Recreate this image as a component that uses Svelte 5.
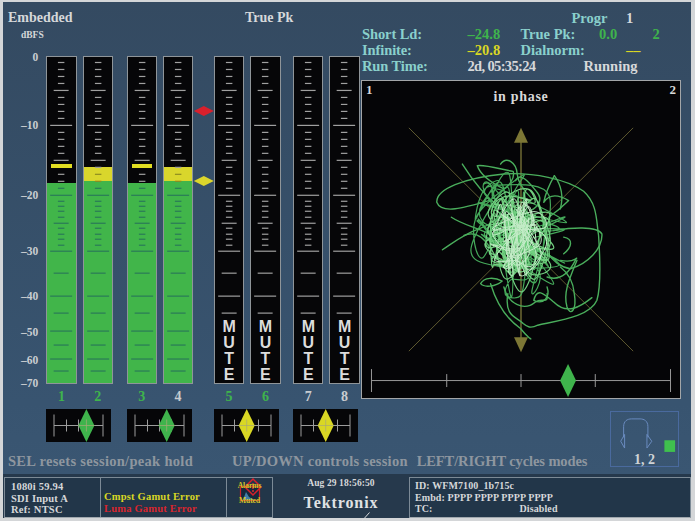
<script lang="ts">
	const top = 56;
	const scale = [
		[0, 58], [-10, 126], [-20, 196], [-30, 252], [-40, 297], [-50, 333], [-60, 361], [-70, 384]
	];
	const small = [62, 69, 76, 83, 97, 104, 111, 118, 132, 139, 146, 153, 167, 174, 181, 188, 201, 206, 211, 217, 228, 234, 239, 245];
	const medium = [90, 160, 223, 273, 313, 345, 371];
	const long = [125, 195, 251, 296, 331, 359];
	const ticks = [
		...small.map((y) => ({ y, w: 6.5 })),
		...medium.map((y) => ({ y, w: 15 })),
		...long.map((y) => ({ y, w: 22 }))
	];

	const groups = [
		[
			{ n: 1, fill: 183, peak: 163.5, numColor: 'green' },
			{ n: 2, fill: 181, hold: 167, numColor: 'green' }
		],
		[
			{ n: 3, fill: 183, peak: 163.5, numColor: 'green' },
			{ n: 4, fill: 181, hold: 167, numColor: 'white' }
		],
		[
			{ n: 5, muted: true, numColor: 'green' },
			{ n: 6, muted: true, numColor: 'green' }
		],
		[
			{ n: 7, muted: true, numColor: 'white' },
			{ n: 8, muted: true, numColor: 'white' }
		]
	];

	const balances = [
		{ pos: 40.4, color: '#3fb44c' },
		{ pos: 39.7, color: '#3fb44c' },
		{ pos: 32.7, color: '#d9d724' },
		{ pos: 32.7, color: '#d9d724' }
	];

	// seeded so the lissajous blob comes out the same on every load
	function rng(seed: number) {
		return () => {
			seed = (seed + 0x6d2b79f5) | 0;
			let t = Math.imul(seed ^ (seed >>> 15), 1 | seed);
			t = (t + Math.imul(t ^ (t >>> 7), 61 | t)) ^ t;
			return ((t ^ (t >>> 14)) >>> 0) / 4294967296;
		};
	}

	function blob(seed: number, count: number, rx: number, ry: number) {
		const r = rng(seed);
		const pts: number[][] = [];
		for (let i = 0; i < count; i++) {
			const a = r() * Math.PI * 2;
			const d = Math.sqrt(r());
			pts.push([520 + Math.cos(a) * d * rx, 236 + Math.sin(a) * d * ry]);
		}
		let d = `M${pts[0][0].toFixed(1)} ${pts[0][1].toFixed(1)}`;
		for (let i = 0; i < pts.length - 1; i++) {
			const p0 = pts[Math.max(i - 1, 0)];
			const p1 = pts[i];
			const p2 = pts[i + 1];
			const p3 = pts[Math.min(i + 2, pts.length - 1)];
			const c1 = [p1[0] + (p2[0] - p0[0]) / 6, p1[1] + (p2[1] - p0[1]) / 6];
			const c2 = [p2[0] - (p3[0] - p1[0]) / 6, p2[1] - (p3[1] - p1[1]) / 6];
			d += `C${c1[0].toFixed(1)} ${c1[1].toFixed(1)} ${c2[0].toFixed(1)} ${c2[1].toFixed(1)} ${p2[0].toFixed(1)} ${p2[1].toFixed(1)}`;
		}
		return d;
	}

	const blobOuter = blob(7, 60, 52, 62);
	const blobMid = blob(21, 90, 38, 50);
	const blobCore = blob(5, 70, 31, 40);

	// outer loops traced by hand, in 3x crop coordinates
	const loops = [
		'M65 388C100 365 130 340 175 325C210 312 225 300 240 280',
		'M92 290C130 315 170 320 215 345C240 360 250 380 262 400',
		'M205 240C130 262 62 282 48 245C46 205 130 172 250 160C335 154 440 175 490 212C532 250 528 300 535 345C540 420 542 500 530 540C510 588 420 600 352 615C330 626 320 620 308 610C290 590 250 590 262 520',
		'M125 130C150 170 190 225 240 262',
		'M170 135C190 130 250 148 278 152C285 175 260 200 250 205C220 190 180 165 170 135Z',
		'M240 130C258 105 288 125 290 160C292 190 320 220 335 235',
		'M400 330C450 322 530 315 545 340C548 385 500 432 450 445C420 440 395 420 385 400',
		'M180 490C190 470 222 470 245 482C225 500 190 502 180 490Z',
		'M402 165C385 195 375 220 370 245C390 215 420 225 445 240C420 265 400 280 385 290',
		'M402 165C420 190 432 220 420 265',
		'M515 532C480 560 440 585 400 545C370 520 350 500 340 540C370 555 390 530 380 500',
		'M470 420C445 480 428 520 440 560C450 590 470 570 462 520C458 480 440 455 420 440',
		'M210 490C225 540 250 590 300 625C320 650 335 660 330 655',
		'M190 190C205 180 220 195 215 225',
		'M430 350C460 355 455 380 430 400',
		'M250 500C262 550 310 575 345 545C365 530 385 555 380 520',
		'M130 345C165 330 190 350 210 385',
		'M420 420C470 430 475 400 465 420C440 470 410 480 380 470',
		'M285 180C300 150 330 190 350 215C370 240 350 260 330 270'
	];

	const phonesPath = 'M623 438V427C623 421 627 419 631 419H640C644 419 648 421 648 427V438';
</script>

<div class="screen">
	<div class="upper">
		<section class="meters">
			<header class="meters-head">
				<div>
					<h1>Embedded</h1>
					<span class="unit">dBFS</span>
				</div>
				<span class="mode">True Pk</span>
			</header>

			<div class="meters-body">
				<div class="scale">
					{#each scale as [value, y]}
						<span style="top: {y - top}px">{value === 0 ? '0' : `–${-value}`}</span>
					{/each}
				</div>

				<div class="bars">
					{#each groups as group}
						<div class="pair">
							{#each group as m}
								<div class="bar-col">
									<div class="bar">
										{#if m.fill}
											<div class="fill" style="top: {m.fill - top - 1}px"></div>
										{/if}
										{#if m.hold}
											<div class="hold" style="top: {m.hold - top - 1}px; height: {m.fill - m.hold}px"></div>
										{/if}
										<svg class="ticks" viewBox="0 0 28.3 326">
											{#each ticks as t}
												{#if !m.muted || t.y < 320}
													<line
														x1={14.15 - t.w / 2}
														x2={14.15 + t.w / 2}
														y1={t.y - top - 0.5}
														y2={t.y - top - 0.5}
														stroke={m.fill && t.y > m.fill ? '#2a7a58' : m.hold && t.y > m.hold ? '#8e8c20' : '#a0a0a0'}
														stroke-width="1.2"
													/>
												{/if}
											{/each}
										</svg>
										{#if m.peak}
											<div class="peak" style="top: {m.peak - top - 1}px"></div>
										{/if}
										{#if m.muted}
											<div class="mute">
												<span>M</span><span>U</span><span>T</span><span>E</span>
											</div>
										{/if}
									</div>
									<span class="num {m.numColor}">{m.n}</span>
								</div>
							{/each}
						</div>
					{/each}
					<span class="marker red"></span>
					<span class="marker yellow"></span>
				</div>
			</div>
		</section>

		<section class="right">
			<div class="readout">
				<span class="cy c-progr">Progr</span>
				<span class="wh c-one">1</span>

				<span class="cy c-a r2">Short Ld:</span>
				<span class="gr c-b r2">–24.8</span>
				<span class="cy c-c r2">True Pk:</span>
				<span class="gr c-d r2">0.0</span>
				<span class="gr c-e r2">2</span>

				<span class="cy c-a r3">Infinite:</span>
				<span class="ye c-b r3">–20.8</span>
				<span class="cy c-c r3">Dialnorm:</span>
				<span class="ye c-dash r3">––</span>

				<span class="cy c-a r4">Run Time:</span>
				<span class="wh c-b r4 tight">2d, 05:35:24</span>
				<span class="wh c-run r4">Running</span>
			</div>

			<div class="scope">
				<div class="scope-head">
					<span>1</span>
					<span class="phase">in phase</span>
					<span>2</span>
				</div>
				<svg class="scope-plot" viewBox="361 80 319 318">
					<g stroke="#5e5930" stroke-width="1" fill="none">
						<line x1="408" y1="127" x2="633" y2="351" />
						<line x1="633" y1="127" x2="408" y2="351" />
						<line x1="520.5" y1="135" x2="520.5" y2="345" stroke-width="1.5" stroke="#6f6a34" />
					</g>
					<polygon points="520.5,127 513.5,142 527.5,142" fill="#7d7735" />
					<polygon points="520.5,352 513.5,337 527.5,337" fill="#7d7735" />

					<g fill="none" stroke-linecap="round" stroke-linejoin="round">
						<g transform="translate(420 120) scale(.3333)" stroke="#4aae5c" stroke-width="4.2">
							{#each loops as d}
								<path {d} />
							{/each}
						</g>
						<path d={blobOuter} stroke="#45a95a" stroke-width="1.2" />
						<path d={blobMid} stroke="#72cf80" stroke-width="1.2" />
						<path d={blobCore} stroke="#c4ecc8" stroke-width="1" />
					</g>

					<g stroke="#9a9a9a" stroke-width="1">
						<line x1="370.5" y1="380.5" x2="670.5" y2="380.5" />
						<line x1="370.5" y1="369" x2="370.5" y2="392" />
						<line x1="446" y1="374" x2="446" y2="387" />
						<line x1="520.5" y1="374" x2="520.5" y2="387" />
						<line x1="595" y1="374" x2="595" y2="387" />
						<line x1="670.5" y1="369" x2="670.5" y2="392" />
					</g>
					<polygon points="567.7,364 575.7,380.5 567.7,397 559.7,380.5" fill="#3fb44c" />
				</svg>
			</div>
		</section>
	</div>

	<div class="lower">
		<div class="controls">
			<div class="balances">
				{#each balances as b}
					<svg class="balance" viewBox="0 0 65 33">
						<g stroke="#9c9c9c" stroke-width="1">
							<line x1="8" y1="16.5" x2="57" y2="16.5" />
							<line x1="8" y1="5.5" x2="8" y2="27.5" />
							<line x1="20.5" y1="10.5" x2="20.5" y2="22.5" />
							<line x1="32.5" y1="10.5" x2="32.5" y2="22.5" />
							<line x1="44.5" y1="10.5" x2="44.5" y2="22.5" />
							<line x1="57" y1="5.5" x2="57" y2="27.5" />
						</g>
						<polygon
							points="{b.pos},0 {b.pos + 8},16.5 {b.pos},33 {b.pos - 8},16.5"
							fill={b.color}
						/>
						<line x1={b.pos - 8} x2={b.pos + 8} y1="16.5" y2="16.5" stroke="#a8a878" stroke-opacity=".7" />
						<line x1={b.pos} x2={b.pos} y1="10.5" y2="22.5" stroke="#a8a878" stroke-opacity=".7" />
					</svg>
				{/each}
			</div>
			<div class="help">
				<span class="h1">SEL resets session/peak hold</span>
				<span class="h2">UP/DOWN controls session</span>
				<span class="h3">LEFT/RIGHT cycles modes</span>
			</div>
		</div>

		<div class="phones">
			<svg viewBox="610 412 69 42" class="phones-icon">
				<path d={phonesPath} fill="none" stroke="#6a8bc0" stroke-width="1" />
				<path d="M624 435L620 442L624 449V435ZM647 435L652 442L647 449V435Z" fill="none" stroke="#6a8bc0" stroke-width="1" />
				<rect x="665" y="441" width="11" height="12" fill="#3fc04e" />
			</svg>
			<span>1, 2</span>
		</div>
	</div>

	<footer class="footer">
		<div class="panel status">
			<div class="cell source">
				<div>1080i 59.94</div>
				<div>SDI Input A</div>
				<div>Ref: NTSC</div>
			</div>
			<div class="cell errors">
				<div class="err-y">Cmpst Gamut Error</div>
				<div class="err-r">Luma Gamut Error</div>
			</div>
			<div class="cell alarm">
				<span class="alarm-t">Alarms</span>
				<svg viewBox="0 0 20 15" class="alarm-icon">
					<rect x="0.5" y="0.5" width="19" height="14" fill="#16283c" stroke="#c8202a" stroke-width="1.2" />
					<path d="M3 14L6 6L9 11L14 14Z" fill="#3f7fa8" />
					<path d="M13 -7L21 1L13 9L5 1Z" fill="none" stroke="#d8202a" stroke-width="1.5" />
					<path d="M13 -3V3M13 4V6" stroke="#e23030" stroke-width="1.4" />
				</svg>
				<span class="alarm-t">Muted</span>
			</div>
		</div>
		<div class="brand">
			<span class="date">Aug 29 18:56:50</span>
			<span class="logo">Tektronix</span>
			<svg class="slash" viewBox="0 0 9 10"><line x1="0.5" y1="9.5" x2="8.5" y2="0.5" stroke="#d8dadc" /></svg>
		</div>
		<div class="panel ident">
			<div>ID: WFM7100_1b715c</div>
			<div>Embd: PPPP PPPP PPPP PPPP</div>
			<div class="tc"><span>TC:</span><span class="tc-v">Disabled</span></div>
		</div>
	</footer>
</div>

<style>
	:global(body) {
		margin: 0;
		background: #d4d6d8;
	}

	.screen {
		width: 695px;
		height: 521px;
		box-sizing: border-box;
		padding: 2px 4px 3px 3px;
		display: flex;
		flex-direction: column;
		font-family: 'Liberation Serif', serif;
		font-weight: 700;
		color: #d6d8da;
		overflow: hidden;
	}

	.upper {
		display: flex;
		height: 401px;
		background: linear-gradient(#344a61, #385470);
	}

	.meters {
		width: 358px;
		flex: none;
	}

	.meters-head {
		height: 54px;
		position: relative;
		padding-left: 5px;
	}

	h1 {
		margin: 0;
		padding-top: 9px;
		font-size: 14px;
		line-height: 14px;
	}

	.unit {
		display: block;
		margin: 5px 0 0 13px;
		font-size: 9.5px;
		line-height: 10px;
	}

	.mode {
		position: absolute;
		left: 242px;
		top: 9px;
		font-size: 14px;
		line-height: 14px;
	}

	.meters-body {
		display: flex;
	}

	.scale {
		position: relative;
		width: 43.3px;
		flex: none;
		font-size: 11.5px;
		color: #c9cdd1;
	}

	.scale span {
		position: absolute;
		right: 8px;
		line-height: 12px;
		margin-top: -7px;
	}

	.bars {
		display: flex;
		position: relative;
		height: 348px;
	}

	.pair {
		display: flex;
		gap: 6px;
		margin-right: 13.7px;
		flex: none;
	}

	.pair:nth-child(2) {
		margin-right: 20.8px;
	}

	.pair:nth-child(3) {
		margin-right: 12.6px;
	}

	.bar-col {
		width: 30.3px;
		flex: none;
		display: flex;
		flex-direction: column;
		align-items: center;
	}

	.bar {
		position: relative;
		width: 100%;
		height: 327.5px;
		box-sizing: border-box;
		border: 1px solid #8f9599;
		background: #060608;
		overflow: hidden;
	}

	.fill {
		position: absolute;
		inset: 0;
		background: #41b54a;
	}

	.hold {
		position: absolute;
		left: 0;
		right: 0;
		background: #d9d62c;
	}

	.ticks {
		position: absolute;
		inset: 0;
		width: 100%;
		height: 100%;
	}

	.peak {
		position: absolute;
		left: 4px;
		right: 4px;
		height: 4px;
		background: #e2de22;
	}

	.mute {
		position: absolute;
		left: 0;
		right: 0;
		bottom: 0;
		display: flex;
		flex-direction: column;
		align-items: center;
		font-family: 'Liberation Sans', sans-serif;
		font-size: 16px;
		line-height: 16px;
		color: #dcdcdc;
	}

	.num {
		margin-top: 6px;
		font-size: 14px;
		line-height: 14px;
	}

	.num.green {
		color: #3fb44c;
	}

	.num.white {
		color: #c8ccd0;
	}

	.marker {
		position: absolute;
		left: 147.5px;
		width: 20px;
		height: 10px;
		clip-path: polygon(50% 0, 100% 50%, 50% 100%, 0 50%);
	}

	.marker.red {
		top: 50px;
		background: #d9202c;
	}

	.marker.yellow {
		top: 120px;
		background: #dcd62c;
	}

	.right {
		flex: 1;
		min-width: 0;
	}

	.readout {
		height: 78px;
		box-sizing: border-box;
		padding: 8px 0 0 1px;
		display: grid;
		grid-template-columns: 105.5px 53px 78.5px 53.5px 20px;
		grid-template-rows: repeat(4, 16px);
		font-size: 14.5px;
		line-height: 16px;
		align-items: center;
		white-space: nowrap;
	}

	.cy {
		color: #8ad0cc;
	}

	.gr {
		color: #3fb44c;
	}

	.ye {
		color: #d9d724;
	}

	.wh {
		color: #d6d8da;
	}

	.r2 {
		grid-row: 2;
	}

	.r3 {
		grid-row: 3;
	}

	.r4 {
		grid-row: 4;
	}

	.tight {
		letter-spacing: -0.65px;
	}

	.c-progr {
		grid-column: 3 / 5;
		grid-row: 1;
		padding-left: 51px;
	}

	.c-one {
		grid-column: 5;
		grid-row: 1;
		margin-left: -26.5px;
	}

	.c-a {
		grid-column: 1;
		letter-spacing: -0.1px;
	}

	.c-b {
		grid-column: 2;
	}

	.c-c {
		grid-column: 3;
	}

	.c-d {
		grid-column: 4;
	}

	.c-e {
		grid-column: 5;
	}

	.c-dash {
		grid-column: 4 / 6;
		padding-left: 27px;
	}

	.c-run {
		grid-column: 3 / 5;
		padding-left: 63px;
	}

	.scope {
		position: relative;
		width: 320px;
		height: 319px;
		box-sizing: border-box;
		border: 1px solid #a3a6a8;
		background: #050507;
	}

	.scope-head {
		position: absolute;
		inset: 0 0 auto 0;
		z-index: 1;
		display: flex;
		justify-content: space-between;
		padding: 2px 4px;
		font-size: 13px;
		line-height: 13px;
		color: #d8d8d8;
	}

	.phase {
		margin-top: 7px;
		font-size: 14px;
		letter-spacing: 0.7px;
	}

	.scope-plot {
		width: 100%;
		height: 100%;
		display: block;
	}

	.lower {
		flex: 1;
		display: flex;
		background: linear-gradient(#385470, #3a5672);
		position: relative;
	}

	.controls {
		flex: 1;
		min-width: 0;
		padding-top: 6px;
	}

	.balances {
		display: flex;
		padding-left: 43.3px;
	}

	.balance {
		width: 65px;
		height: 33px;
		background: #060608;
		margin-right: 15.3px;
		flex: none;
	}

	.balance:nth-child(2) {
		margin-right: 22.3px;
	}

	.balance:nth-child(3) {
		margin-right: 14.3px;
	}

	.help {
		display: flex;
		margin-top: 11px;
		padding-left: 5px;
		font-size: 14.5px;
		line-height: 16px;
		color: #8e969f;
		white-space: nowrap;
		letter-spacing: 0.3px;
	}

	.h2 {
		margin-left: 39px;
		letter-spacing: 0.25px;
	}

	.h3 {
		margin-left: 9px;
		letter-spacing: -0.1px;
	}

	.phones {
		width: 69px;
		height: 56px;
		box-sizing: border-box;
		border: 1px solid #4a6a9e;
		margin: 8px 12px 0 0;
		flex: none;
		position: relative;
		font-size: 14px;
		line-height: 13px;
		text-align: center;
		color: #cfd3d6;
	}

	.phones-icon {
		display: block;
		width: 67px;
		height: 41px;
	}

	.footer {
		height: 44px;
		flex: none;
		display: flex;
		background: #26394c;
		padding-top: 3px;
		box-sizing: border-box;
		font-size: 10.5px;
		line-height: 12px;
		letter-spacing: 0.2px;
		position: relative;
	}

	.panel {
		border: 1px solid #7c8a96;
		border-bottom-color: #a0a8ae;
		background: #223649;
		box-sizing: border-box;
		height: 41px;
		flex: none;
	}

	.status {
		width: 269px;
		display: flex;
		margin-left: 1px;
	}

	.cell {
		box-sizing: border-box;
		height: 100%;
		border-right: 1px solid #7c8a96;
	}

	.source {
		width: 96px;
		padding: 3px 0 0 6px;
		line-height: 11.7px;
	}

	.errors {
		width: 126px;
		padding: 13px 0 0 3px;
		line-height: 12px;
	}

	.err-y {
		color: #d9d724;
	}

	.err-r {
		color: #d8252e;
	}

	.alarm {
		flex: 1;
		border-right: 0;
		display: flex;
		flex-direction: column;
		align-items: center;
		padding-top: 4px;
		font-size: 7.5px;
		line-height: 8px;
		letter-spacing: 0;
		color: #d4c828;
	}

	.alarm-icon {
		width: 20px;
		height: 15px;
		display: block;
		margin: -4px 0 -4px;
		overflow: visible;
	}

	.alarm-t {
		position: relative;
		z-index: 1;
	}

	.brand {
		width: 136px;
		flex: none;
		display: flex;
		flex-direction: column;
		align-items: center;
		position: relative;
	}

	.date {
		margin-top: 1px;
		font-size: 9.5px;
		line-height: 11px;
		letter-spacing: 0.1px;
	}

	.logo {
		margin-top: 6px;
		font-size: 16px;
		line-height: 16px;
		letter-spacing: 0.9px;
		color: #e0e2e4;
	}

	.slash {
		position: absolute;
		left: 88px;
		bottom: -4px;
		width: 9px;
		height: 10px;
	}

	.ident {
		width: 282px;
		padding: 2px 0 0 5px;
		color: #d6d8da;
		font-size: 10px;
		letter-spacing: 0.1px;
		line-height: 11.7px;
	}

	.tc {
		display: flex;
	}

	.tc-v {
		margin-left: 87px;
	}
</style>
